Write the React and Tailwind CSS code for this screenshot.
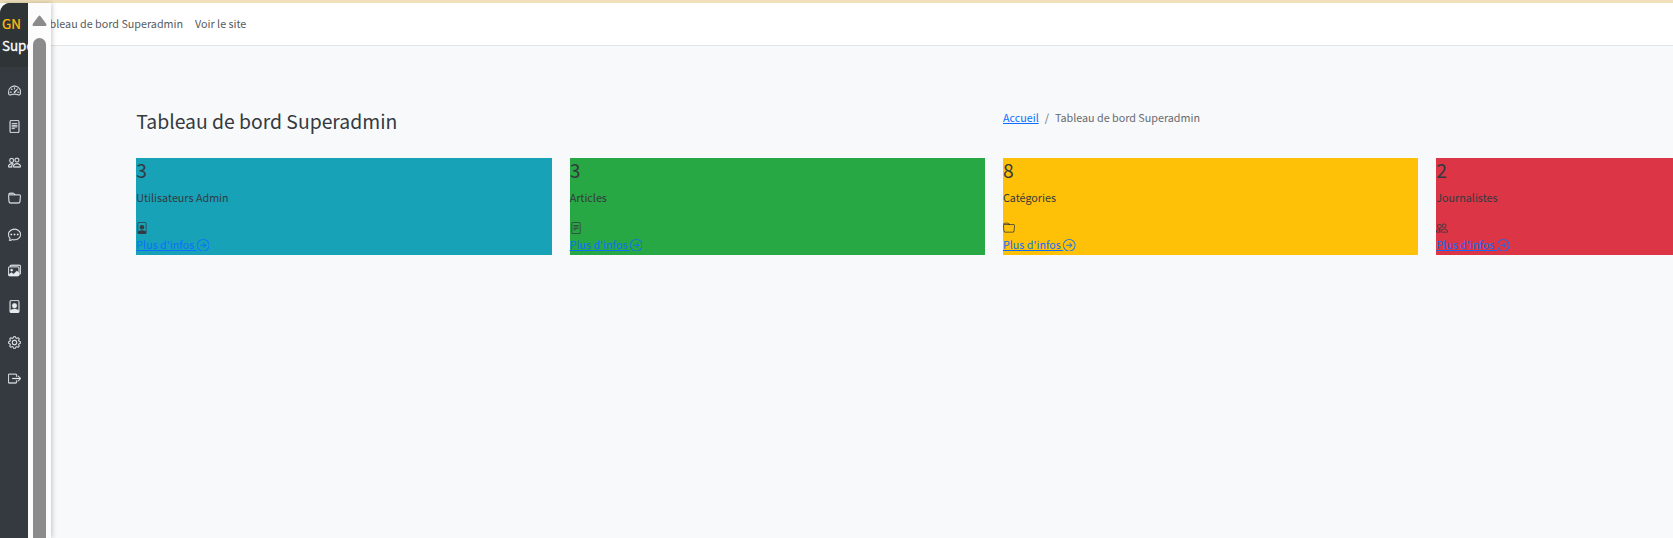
import {
  BsSpeedometer2, BsFileText, BsPeople, BsFolder, BsChatDots, BsImages,
  BsFilePerson, BsGear, BsBoxArrowRight, BsArrowRightCircle,
} from 'react-icons/bs';

const menu = [
  BsSpeedometer2, BsFileText, BsPeople, BsFolder, BsChatDots,
  BsImages, BsFilePerson, BsGear, BsBoxArrowRight,
];

const cards = [
  { value: 3, label: 'Utilisateurs Admin', Icon: BsFilePerson, color: 'bg-[#17a2b8]' },
  { value: 3, label: 'Articles', Icon: BsFileText, color: 'bg-[#28a745]' },
  { value: 8, label: 'Catégories', Icon: BsFolder, color: 'bg-[#ffc107]' },
  { value: 2, label: 'Journalistes', Icon: BsPeople, color: 'bg-[#dc3545]' },
];

function Sidebar() {
  return (
    <aside className="relative z-10 flex w-[51px] shrink-0 bg-[#fcfcfc] shadow-[1px_0_5px_rgba(0,0,0,0.22)]">
      <div className="flex w-7 shrink-0 flex-col overflow-hidden rounded-tl-[10px] bg-[#343a40]">
        <div className="h-16 shrink-0 overflow-hidden bg-[#2f3437] pl-[2px] pt-[9px] text-[13.4px] leading-[22px] text-white">
          <div className="text-[#ffc107] [-webkit-text-stroke:0.2px_#ffc107]">GN</div>
          <div className="whitespace-nowrap [-webkit-text-stroke:0.3px_white]">Superadmin</div>
        </div>
        <nav className="flex flex-col items-center pt-[6px] text-[#e6eaed]">
          {menu.map((Icon, i) => (
            <a key={i} className="flex h-9 items-center pb-px"><Icon size={13} strokeWidth={0.3} /></a>
          ))}
        </nav>
      </div>
      <div className="flex w-[23px] flex-col items-center pr-[1px] pt-3">
        <svg width="15" height="12" viewBox="0 0 15 12" fill="#8b8b8b">
          <path d="M6.6 1 Q7.5 0 8.4 1 L14.3 9 Q15 11 13.5 11 H1.5 Q0 11 .7 9 Z" />
        </svg>
        <div className="mt-[11px] w-[13px] flex-1 rounded-t-full bg-[#8b8b8b]" />
      </div>
    </aside>
  );
}

function StatCard({ value, label, Icon, color }) {
  return (
    <div className={`h-[97px] w-[415.5px] shrink-0 ${color}`}>
      <div className="h-[31px] text-[19.3px] leading-[25px]">{value}</div>
      <div className="h-[30px] leading-[18px]">{label}</div>
      <div className="flex h-[17px] items-center"><Icon size={12} /></div>
      <a className="flex h-[18px] items-center text-[#0d6efd]">
        <span className="whitespace-pre pt-px underline">{"Plus d'infos "}</span>
        <BsArrowRightCircle size={12.5} />
      </a>
    </div>
  );
}

export default function App() {
  return (
    <div className="flex h-[538px] flex-col overflow-hidden bg-[#f0e1bc] pt-[3px] font-['Noto_Sans_CJK_SC',sans-serif] text-[10.75px] text-[#343a40]">
      <div className="flex min-h-0 flex-1">
        <Sidebar />
        <div className="min-w-0 flex-1 bg-[#f8f9fb]">
          <header className="flex h-[43px] items-center gap-3 overflow-hidden border-b border-[#e2e4e6] bg-white text-[#555b60]">
            <span className="-ml-[13px] whitespace-nowrap">Tableau de bord Superadmin</span>
            <span className="whitespace-nowrap">Voir le site</span>
          </header>
          <main className="pl-[85.3px] pt-[60px]">
            <div className="flex h-[52px]">
              <h1 className="w-[866.7px] shrink-0 text-[19.35px] leading-[31px]">Tableau de bord Superadmin</h1>
              <div className="flex gap-[6px] pt-[3px] leading-[18px] text-[#666b70]">
                <a className="text-[#0d6efd] underline">Accueil</a>
                <span>/</span>
                <span>Tableau de bord Superadmin</span>
              </div>
            </div>
            <div className="flex gap-[17.83px]">
              {cards.map((card) => <StatCard key={card.label} {...card} />)}
            </div>
          </main>
        </div>
      </div>
    </div>
  );
}
